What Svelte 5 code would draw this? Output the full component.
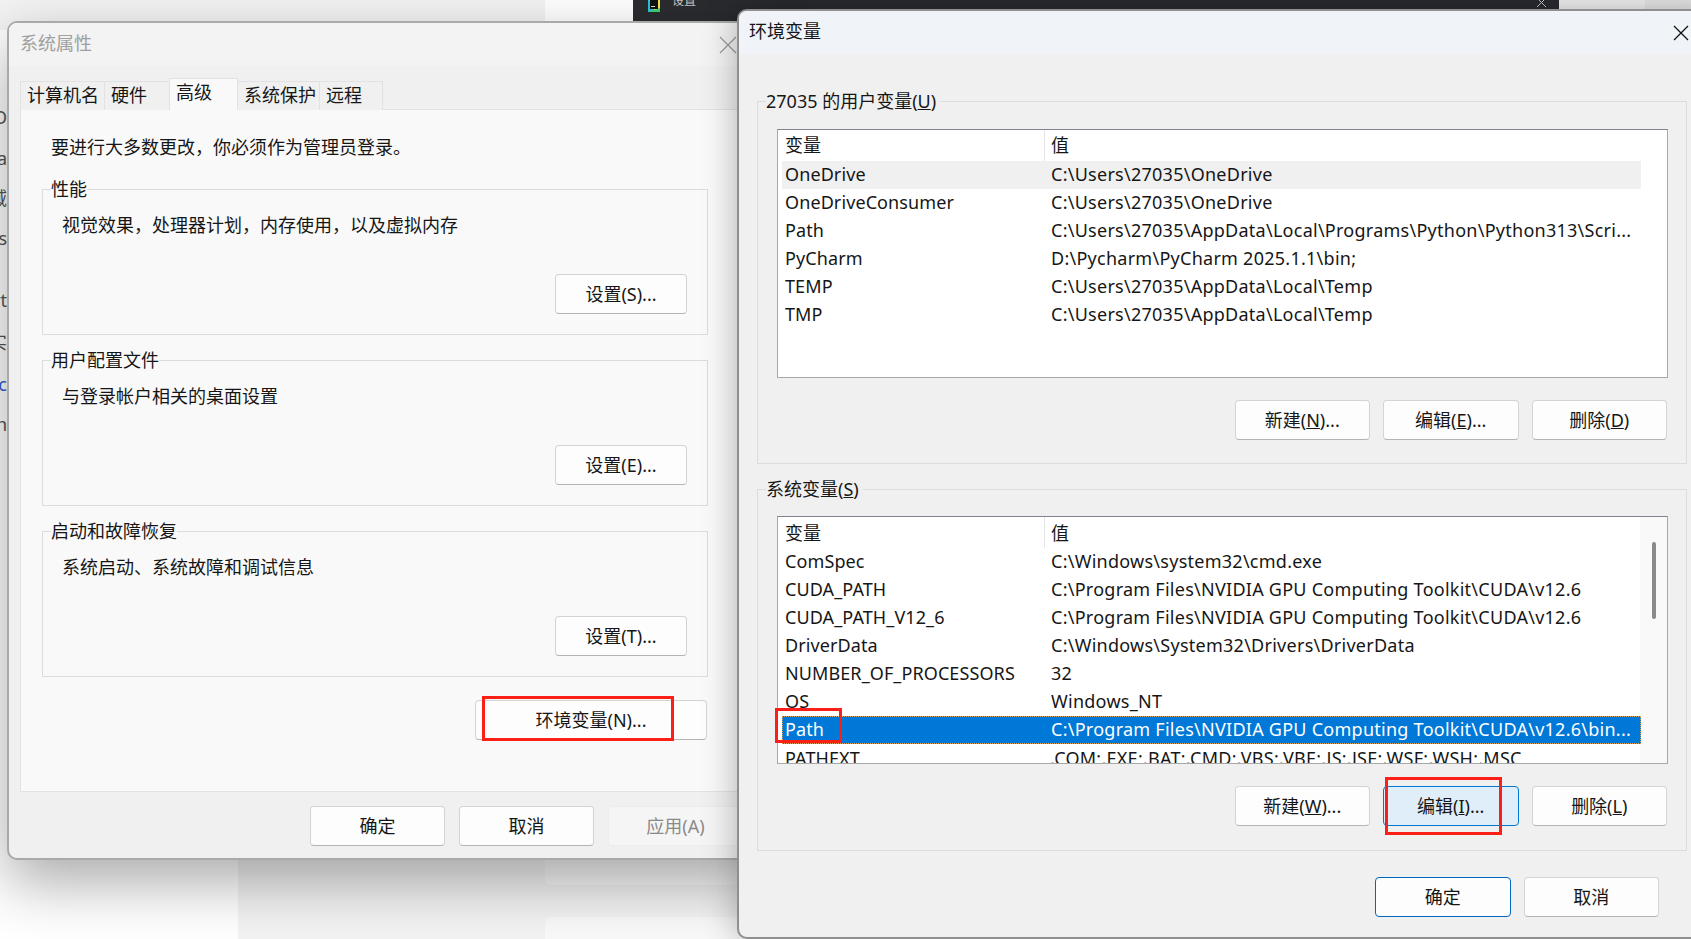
<script>
  const userVars = [
    ['OneDrive', 'C:\\Users\\27035\\OneDrive'],
    ['OneDriveConsumer', 'C:\\Users\\27035\\OneDrive'],
    ['Path', 'C:\\Users\\27035\\AppData\\Local\\Programs\\Python\\Python313\\Scri...'],
    ['PyCharm', 'D:\\Pycharm\\PyCharm 2025.1.1\\bin;'],
    ['TEMP', 'C:\\Users\\27035\\AppData\\Local\\Temp'],
    ['TMP', 'C:\\Users\\27035\\AppData\\Local\\Temp']
  ];
  const sysVars = [
    ['ComSpec', 'C:\\Windows\\system32\\cmd.exe'],
    ['CUDA_PATH', 'C:\\Program Files\\NVIDIA GPU Computing Toolkit\\CUDA\\v12.6'],
    ['CUDA_PATH_V12_6', 'C:\\Program Files\\NVIDIA GPU Computing Toolkit\\CUDA\\v12.6'],
    ['DriverData', 'C:\\Windows\\System32\\Drivers\\DriverData'],
    ['NUMBER_OF_PROCESSORS', '32'],
    ['OS', 'Windows_NT'],
    ['Path', 'C:\\Program Files\\NVIDIA GPU Computing Toolkit\\CUDA\\v12.6\\bin...'],
    ['PATHEXT', '.COM;.EXE;.BAT;.CMD;.VBS;.VBE;.JS;.JSE;.WSF;.WSH;.MSC']
  ];
  const groups = [
    { title: '性能', desc: '视觉效果，处理器计划，内存使用，以及虚拟内存', btn: '设置(S)...' },
    { title: '用户配置文件', desc: '与登录帐户相关的桌面设置', btn: '设置(E)...' },
    { title: '启动和故障恢复', desc: '系统启动、系统故障和调试信息', btn: '设置(T)...' }
  ];
  const tabs = [
    { label: '计算机名', w: 85 },
    { label: '硬件', w: 66 },
    { label: '高级', w: 69 },
    { label: '系统保护', w: 83 },
    { label: '远程', w: 64 }
  ];
  const edgeText = [
    { t: 'O', y: 105, c: '#555' },
    { t: 'na', y: 146, c: '#555' },
    { t: '域', y: 186, c: '#555' },
    { t: 's', y: 226, c: '#555' },
    { t: 'vt', y: 288, c: '#555' },
    { t: '实', y: 330, c: '#555' },
    { t: 'c', y: 372, c: '#2a5bd7' },
    { t: 'n', y: 412, c: '#555' }
  ];
</script>

<div class="desktop">
  <div class="bg-top-left"></div>
  <div class="bg-strip">
    <svg class="strip-icon" width="16" height="14" viewBox="0 0 16 14">
      <rect x="2" y="-3" width="12" height="15" fill="#f3e24c" />
      <path d="M2 -3v15h7z" fill="#2fc1d8" />
      <path d="M2 12h12v-4z" fill="#3ecf6a" />
      <rect x="4" y="-2" width="8" height="11" fill="#111" />
      <rect x="5" y="6" width="4" height="1" fill="#ddd" />
    </svg>
    <span class="strip-label">设置</span>
    <svg class="strip-x" width="10" height="8" viewBox="0 0 10 8">
      <path d="M0 -2 L9 7 M9 -2 L0 7" stroke="#ccc" stroke-width="1" fill="none" />
    </svg>
  </div>
  <div class="bg-top-right"></div>
  <div class="bg-lower"></div>
  <div class="bg-card one"></div>
  <div class="bg-card two"></div>
  {#each edgeText as e}
    <span class="edge" style="top:{e.y}px;color:{e.c}">{e.t}</span>
  {/each}

  <section class="win props">
    <header class="title inactive">
      <span>系统属性</span>
      <svg width="18" height="18" viewBox="0 0 18 18"><path d="M1 1 L17 17 M17 1 L1 17" stroke="#9a9a9a" stroke-width="1.2" fill="none" /></svg>
    </header>
    <div class="tabs">
      {#each tabs as tab}
        <div class="tab" class:active={tab.label === '高级'} style="width:{tab.w}px">{tab.label}</div>
      {/each}
    </div>
    <div class="panel">
      <p class="note">要进行大多数更改，你必须作为管理员登录。</p>
      {#each groups as g}
        <fieldset class="group left">
          <legend>{g.title}</legend>
          <p class="desc">{g.desc}</p>
          <div class="right-row"><button class="btn set">{g.btn}</button></div>
        </fieldset>
      {/each}
      <div class="env-row"><button class="btn env">环境变量(N)...</button></div>
    </div>
    <footer class="foot">
      <button class="btn foot-btn">确定</button>
      <button class="btn foot-btn">取消</button>
      <button class="btn foot-btn disabled">应用(A)</button>
    </footer>
  </section>

  <section class="win envs">
    <header class="title">
      <span>环境变量</span>
      <svg width="16" height="16" viewBox="0 0 16 16"><path d="M1 1 L15 15 M15 1 L1 15" stroke="#111" stroke-width="1.3" fill="none" /></svg>
    </header>
    <div class="envs-body">
      <fieldset class="group var first">
        <legend>27035 的用户变量(<u>U</u>)</legend>
        <div class="list user">
          <div class="row head"><span class="k">变量</span><span class="v">值</span></div>
          {#each userVars as [k, v], i}
            <div class="row" class:hover={i === 0}><span class="k">{k}</span><span class="v">{v}</span></div>
          {/each}
        </div>
        <div class="btns">
          <button class="btn act">新建(<u>N</u>)...</button>
          <button class="btn act">编辑(<u>E</u>)...</button>
          <button class="btn act">删除(<u>D</u>)</button>
        </div>
      </fieldset>
      <fieldset class="group var">
        <legend>系统变量(<u>S</u>)</legend>
        <div class="list sys">
          <div class="track"><div class="thumb"></div></div>
          <div class="row head"><span class="k">变量</span><span class="v">值</span></div>
          {#each sysVars as [k, v]}
            <div class="row" class:selected={k === 'Path'} class:cut={k === 'PATHEXT'}><span class="k">{k}</span><span class="v">{v}</span></div>
          {/each}
        </div>
        <div class="btns">
          <button class="btn act">新建(<u>W</u>)...</button>
          <button class="btn act focus">编辑(<u>I</u>)...</button>
          <button class="btn act">删除(<u>L</u>)</button>
        </div>
      </fieldset>
      <div class="envs-foot">
        <button class="btn act primary">确定</button>
        <button class="btn act">取消</button>
      </div>
    </div>
  </section>

  <div class="mark m-env"></div>
  <div class="mark m-path"></div>
  <div class="mark m-edit"></div>
</div>

<style>
  :global(body) {
    margin: 0;
    background: #fff;
  }

  .desktop {
    position: relative;
    width: 1691px;
    height: 939px;
    overflow: hidden;
    background: #fff;
    font-family: "Noto Sans", "Noto Sans CJK SC", sans-serif;
    font-size: 18px;
    color: #161616;
  }

  /* what shows behind the dialogs */
  .bg-top-left {
    position: absolute;
    left: 0;
    top: 0;
    width: 545px;
    height: 30px;
    background: #f3f3f3;
  }
  .bg-strip {
    position: absolute;
    left: 633px;
    top: 0;
    width: 926px;
    height: 22px;
    background: #2b2c30;
  }
  .strip-icon {
    position: absolute;
    left: 13px;
    top: 0;
  }
  .strip-label {
    position: absolute;
    left: 39px;
    top: -9px;
    font-size: 12px;
    color: #c8c8c8;
    line-height: 20px;
  }
  .strip-x {
    position: absolute;
    left: 904px;
    top: 0;
  }
  .bg-top-right {
    position: absolute;
    left: 1559px;
    top: 0;
    width: 132px;
    height: 10px;
    background: linear-gradient(90deg, #f6f6f6 0 65%, #ececec 65%);
  }
  .bg-lower {
    position: absolute;
    left: 238px;
    top: 858px;
    width: 500px;
    height: 81px;
    background: #f3f3f3;
  }
  .bg-card {
    position: absolute;
    left: 545px;
    width: 200px;
    background: #f9f9f9;
    border-radius: 6px;
  }
  .bg-card.one {
    top: 840px;
    height: 45px;
  }
  .bg-card.two {
    top: 917px;
    height: 40px;
  }
  .edge {
    position: absolute;
    left: -5px;
    width: 12px;
    overflow: hidden;
    font-size: 18px;
    line-height: 24px;
    text-align: right;
    direction: rtl;
  }

  /* windows */
  .win {
    position: absolute;
    box-sizing: border-box;
    border: 2px solid #a9a9a9;
    border-radius: 10px;
    background: #f0f0f0;
    overflow: hidden;
  }
  .props {
    left: 7px;
    top: 21px;
    width: 760px;
    height: 839px;
    box-shadow: 0 22px 60px rgba(0, 0, 0, 0.34);
  }
  .envs {
    left: 737px;
    top: 9px;
    width: 990px;
    height: 930px;
    border-color: #8f8f8f;
    box-shadow: 0 0 34px rgba(0, 0, 0, 0.3);
  }
  .title {
    display: flex;
    align-items: center;
    justify-content: space-between;
    box-sizing: border-box;
    height: 43px;
    padding-left: 10px;
    background: #f0f4f9;
  }
  .title span {
    margin-bottom: 6px;
  }
  .envs .title svg {
    margin-right: 36px;
  }
  .title.inactive {
    background: #f3f3f3;
    color: #a0a0a0;
    padding-left: 11px;
  }
  .title.inactive svg {
    margin-right: 28px;
  }

  .tabs {
    display: flex;
    align-items: flex-end;
    height: 43px;
    padding-left: 11px;
  }
  .tab {
    box-sizing: border-box;
    height: 29px;
    padding-left: 6px;
    line-height: 26px;
    border: 1px solid #e2e2e2;
    border-bottom: none;
    background: #f0f0f0;
    margin-right: -1px;
    margin-bottom: -1px;
    position: relative;
    white-space: nowrap;
  }
  .tab.active {
    height: 32px;
    line-height: 26px;
    background: #f9f9f9;
    z-index: 1;
  }

  .panel {
    box-sizing: border-box;
    margin-left: 11px;
    height: 683px;
    padding: 25px 0 0 21px;
    background: #f9f9f9;
    border: 1px solid #e2e2e2;
  }
  .note {
    margin: 0 0 18px 9px;
    line-height: 24px;
  }

  .group {
    box-sizing: border-box;
    margin: 0;
    min-width: 0;
    border: 1px solid #dcdcdc;
  }
  .group legend {
    padding: 0;
    line-height: 24px;
    margin-left: 0;
  }
  .group.left {
    width: 666px;
    height: 158px;
    padding: 0 20px 0 8px;
    margin-bottom: 13px;
  }
  .desc {
    margin: 12px 0 37px 11px;
    line-height: 24px;
  }
  .right-row {
    display: flex;
    justify-content: flex-end;
  }
  .env-row {
    display: flex;
    justify-content: flex-start;
    margin-top: 23px;
    padding-left: 433px;
  }

  .btn {
    box-sizing: border-box;
    height: 40px;
    padding: 0 0 3px;
    border: 1px solid #d4d4d4;
    border-bottom-color: #b4b4b4;
    border-radius: 4px;
    background: #fdfdfd;
    font: inherit;
    color: inherit;
  }
  .btn.set {
    width: 132px;
  }
  .btn.env {
    width: 232px;
  }
  .foot {
    display: flex;
    gap: 14px;
    padding: 14px 0 0 301px;
  }
  .foot-btn {
    width: 135px;
  }
  .foot-btn.disabled {
    background: #f5f5f5;
    border-color: #ececec;
    color: #8a8a8a;
  }

  .envs-body {
    padding: 35px 0 0 18px;
  }
  .group.var {
    width: 930px;
    padding: 0 19px 0 8px;
  }
  .group.var.first {
    height: 375px;
    margin-bottom: 13px;
  }
  .group.var:not(.first) {
    height: 374px;
  }
  .group.var legend {
    padding-right: 4px;
  }
  .list {
    position: relative;
    box-sizing: border-box;
    width: 891px;
    margin: 15px 0 0 11px;
    background: #fff;
    border: 1px solid #8c8c8c;
    border-color: #7e838c #a8a8a8 #a8a8a8 #a8a8a8;
    overflow: hidden;
    padding-left: 4px;
  }
  .list.user {
    height: 249px;
    margin-top: 16px;
  }
  .list.sys {
    height: 248px;
  }
  .track {
    position: absolute;
    right: 0;
    top: 0;
    bottom: 0;
    width: 27px;
    background: #f9f9f9;
  }
  .thumb {
    position: absolute;
    left: 12px;
    top: 25px;
    width: 4px;
    height: 77px;
    border-radius: 2px;
    background: #8a8a8a;
  }
  .row {
    display: flex;
    box-sizing: border-box;
    width: 859px;
    height: 28px;
    line-height: 26px;
    white-space: nowrap;
    position: relative;
  }
  .row.head {
    height: 31px;
    line-height: 31px;
  }
  .sys .row.head {
    line-height: 33px;
  }
  .row.head .k {
    border-right: 1px solid #e5e5e5;
  }
  .row.hover {
    background: #f0f0f0;
  }
  .row.selected {
    background: #0078d7;
    color: #fff;
    outline: 1px dotted #d9a25a;
    outline-offset: -1px;
  }
  /* last row is only half in view, its baseline falls below the list edge */
  .row.cut {
    line-height: 29px;
  }
  .row.cut .v {
    padding-left: 5px;
  }
  .k {
    box-sizing: border-box;
    width: 263px;
    padding-left: 3px;
    flex: none;
    letter-spacing: 0.1px;
  }
  .v {
    padding-left: 6px;
    letter-spacing: 0.26px;
  }
  .btns {
    display: flex;
    justify-content: flex-end;
    gap: 13px;
    margin: 22px 0 0 0;
  }
  .btn.act {
    width: 135.5px;
  }
  .btn.focus {
    background: #e0eef9;
    border-color: #0078d4;
  }
  .btn.primary {
    border: 1px solid #0067c0;
  }
  .envs-foot {
    display: flex;
    gap: 13px;
    justify-content: flex-end;
    width: 902px;
    margin-top: 26px;
  }

  /* red annotation boxes drawn over the screenshot */
  .mark {
    position: absolute;
    box-sizing: border-box;
    border: 3px solid #fb1f17;
  }
  .m-env {
    left: 482px;
    top: 696px;
    width: 192px;
    height: 45px;
  }
  .m-path {
    left: 775px;
    top: 708px;
    width: 67px;
    height: 35px;
  }
  .m-edit {
    left: 1385px;
    top: 777px;
    width: 117px;
    height: 58px;
  }
</style>
